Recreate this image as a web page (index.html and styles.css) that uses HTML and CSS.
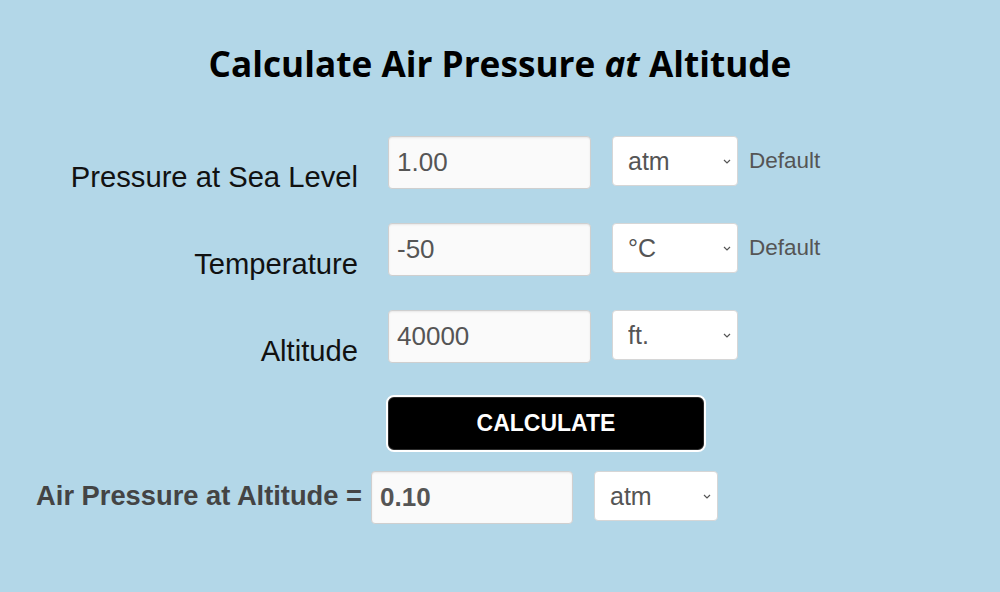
FILE: index.html
```html
<!DOCTYPE html>
<html lang="en">
<head>
<meta charset="utf-8">
<title>Calculate Air Pressure at Altitude</title>
<link rel="stylesheet" href="styles.css">
</head>
<body>
<main class="calc">
  <h1 class="title">Calculate Air Pressure <em>at</em> Altitude</h1>
  <form class="form">
    <div class="row">
      <label class="label" for="p0">Pressure at Sea Level</label>
      <input class="field" id="p0" type="text" value="1.00">
      <select class="unit"><option>atm</option></select>
      <span class="hint">Default</span>
    </div>
    <div class="row">
      <label class="label" for="t">Temperature</label>
      <input class="field" id="t" type="text" value="-50">
      <select class="unit"><option>°C</option></select>
      <span class="hint">Default</span>
    </div>
    <div class="row">
      <label class="label" for="h">Altitude</label>
      <input class="field" id="h" type="text" value="40000">
      <select class="unit"><option>ft.</option></select>
    </div>
    <div class="actions">
      <button class="btn" type="button">CALCULATE</button>
    </div>
    <div class="result">
      <label class="result-label" for="r">Air Pressure at Altitude =</label>
      <input class="field field-result" id="r" type="text" value="0.10">
      <select class="unit unit-result"><option>atm</option></select>
    </div>
  </form>
</main>
</body>
</html>
```
FILE: styles.css
```css
html, body {
  margin: 0;
  padding: 0;
  background: #b3d7e8;
}
body {
  font-family: "Liberation Sans", Arial, sans-serif;
  color: #000;
}
.calc {
  padding-top: 40px;
}
.title {
  margin: 0;
  font-family: "Open Sans", sans-serif;
  font-weight: 700;
  font-size: 35.2px;
  line-height: 46px;
  text-align: center;
  color: #000;
}
.title em {
  font-style: italic;
}
.form {
  margin-top: 50px;
  display: flex;
  flex-direction: column;
}
.row {
  display: flex;
  align-items: flex-start;
  height: 53px;
  margin-bottom: 34px;
}
.label {
  width: 358px;
  text-align: right;
  font-size: 29.2px;
  line-height: 33px;
  padding-top: 25px;
  margin-right: 30px;
  color: #111;
}
.field {
  box-sizing: border-box;
  width: 203px;
  height: 53px;
  margin: 0;
  padding: 0 8px;
  border: 1px solid #cfcfcf;
  border-radius: 4px;
  background: #fafafa;
  box-shadow: inset 0 1px 2px rgba(0, 0, 0, 0.08);
  font-family: "Liberation Sans", Arial, sans-serif;
  font-size: 26px;
  color: #555;
  outline: none;
}
.unit {
  box-sizing: border-box;
  width: 126px;
  height: 50px;
  margin: 0 0 0 21px;
  padding: 0 0 0 15px;
  border: 1px solid #d6d6d6;
  border-radius: 4px;
  background: #fff url("data:image/svg+xml,%3Csvg xmlns='http://www.w3.org/2000/svg' width='8' height='5' viewBox='0 0 8 5'%3E%3Cpath d='M1 1l3 3 3-3' fill='none' stroke='%23555' stroke-width='1.2'/%3E%3C/svg%3E") no-repeat right 6px center;
  -webkit-appearance: none;
  appearance: none;
  font-family: "Liberation Sans", Arial, sans-serif;
  font-size: 25px;
  color: #555;
}
.hint {
  margin-left: 11px;
  font-size: 22.5px;
  line-height: 24px;
  padding-top: 13px;
  color: #555;
}
.actions {
  margin-top: -2px;
  padding-left: 386px;
}
.btn {
  box-sizing: border-box;
  width: 320px;
  height: 57px;
  border: 2px solid #fff;
  border-radius: 8px;
  background: #000;
  box-shadow: inset 0 0 0 1px #2a2a2a;
  font-family: "Liberation Sans", Arial, sans-serif;
  font-weight: 700;
  font-size: 23px;
  color: #fff;
  cursor: pointer;
}
.result {
  margin-top: 19px;
  display: flex;
  align-items: flex-start;
}
.result-label {
  width: 362px;
  text-align: right;
  margin-right: 9px;
  font-weight: 700;
  font-size: 27.3px;
  line-height: 31px;
  padding-top: 9px;
  color: #444;
}
.field-result {
  width: 202px;
  font-weight: 700;
}
.unit-result {
  width: 124px;
  margin-left: 21px;
}
```
